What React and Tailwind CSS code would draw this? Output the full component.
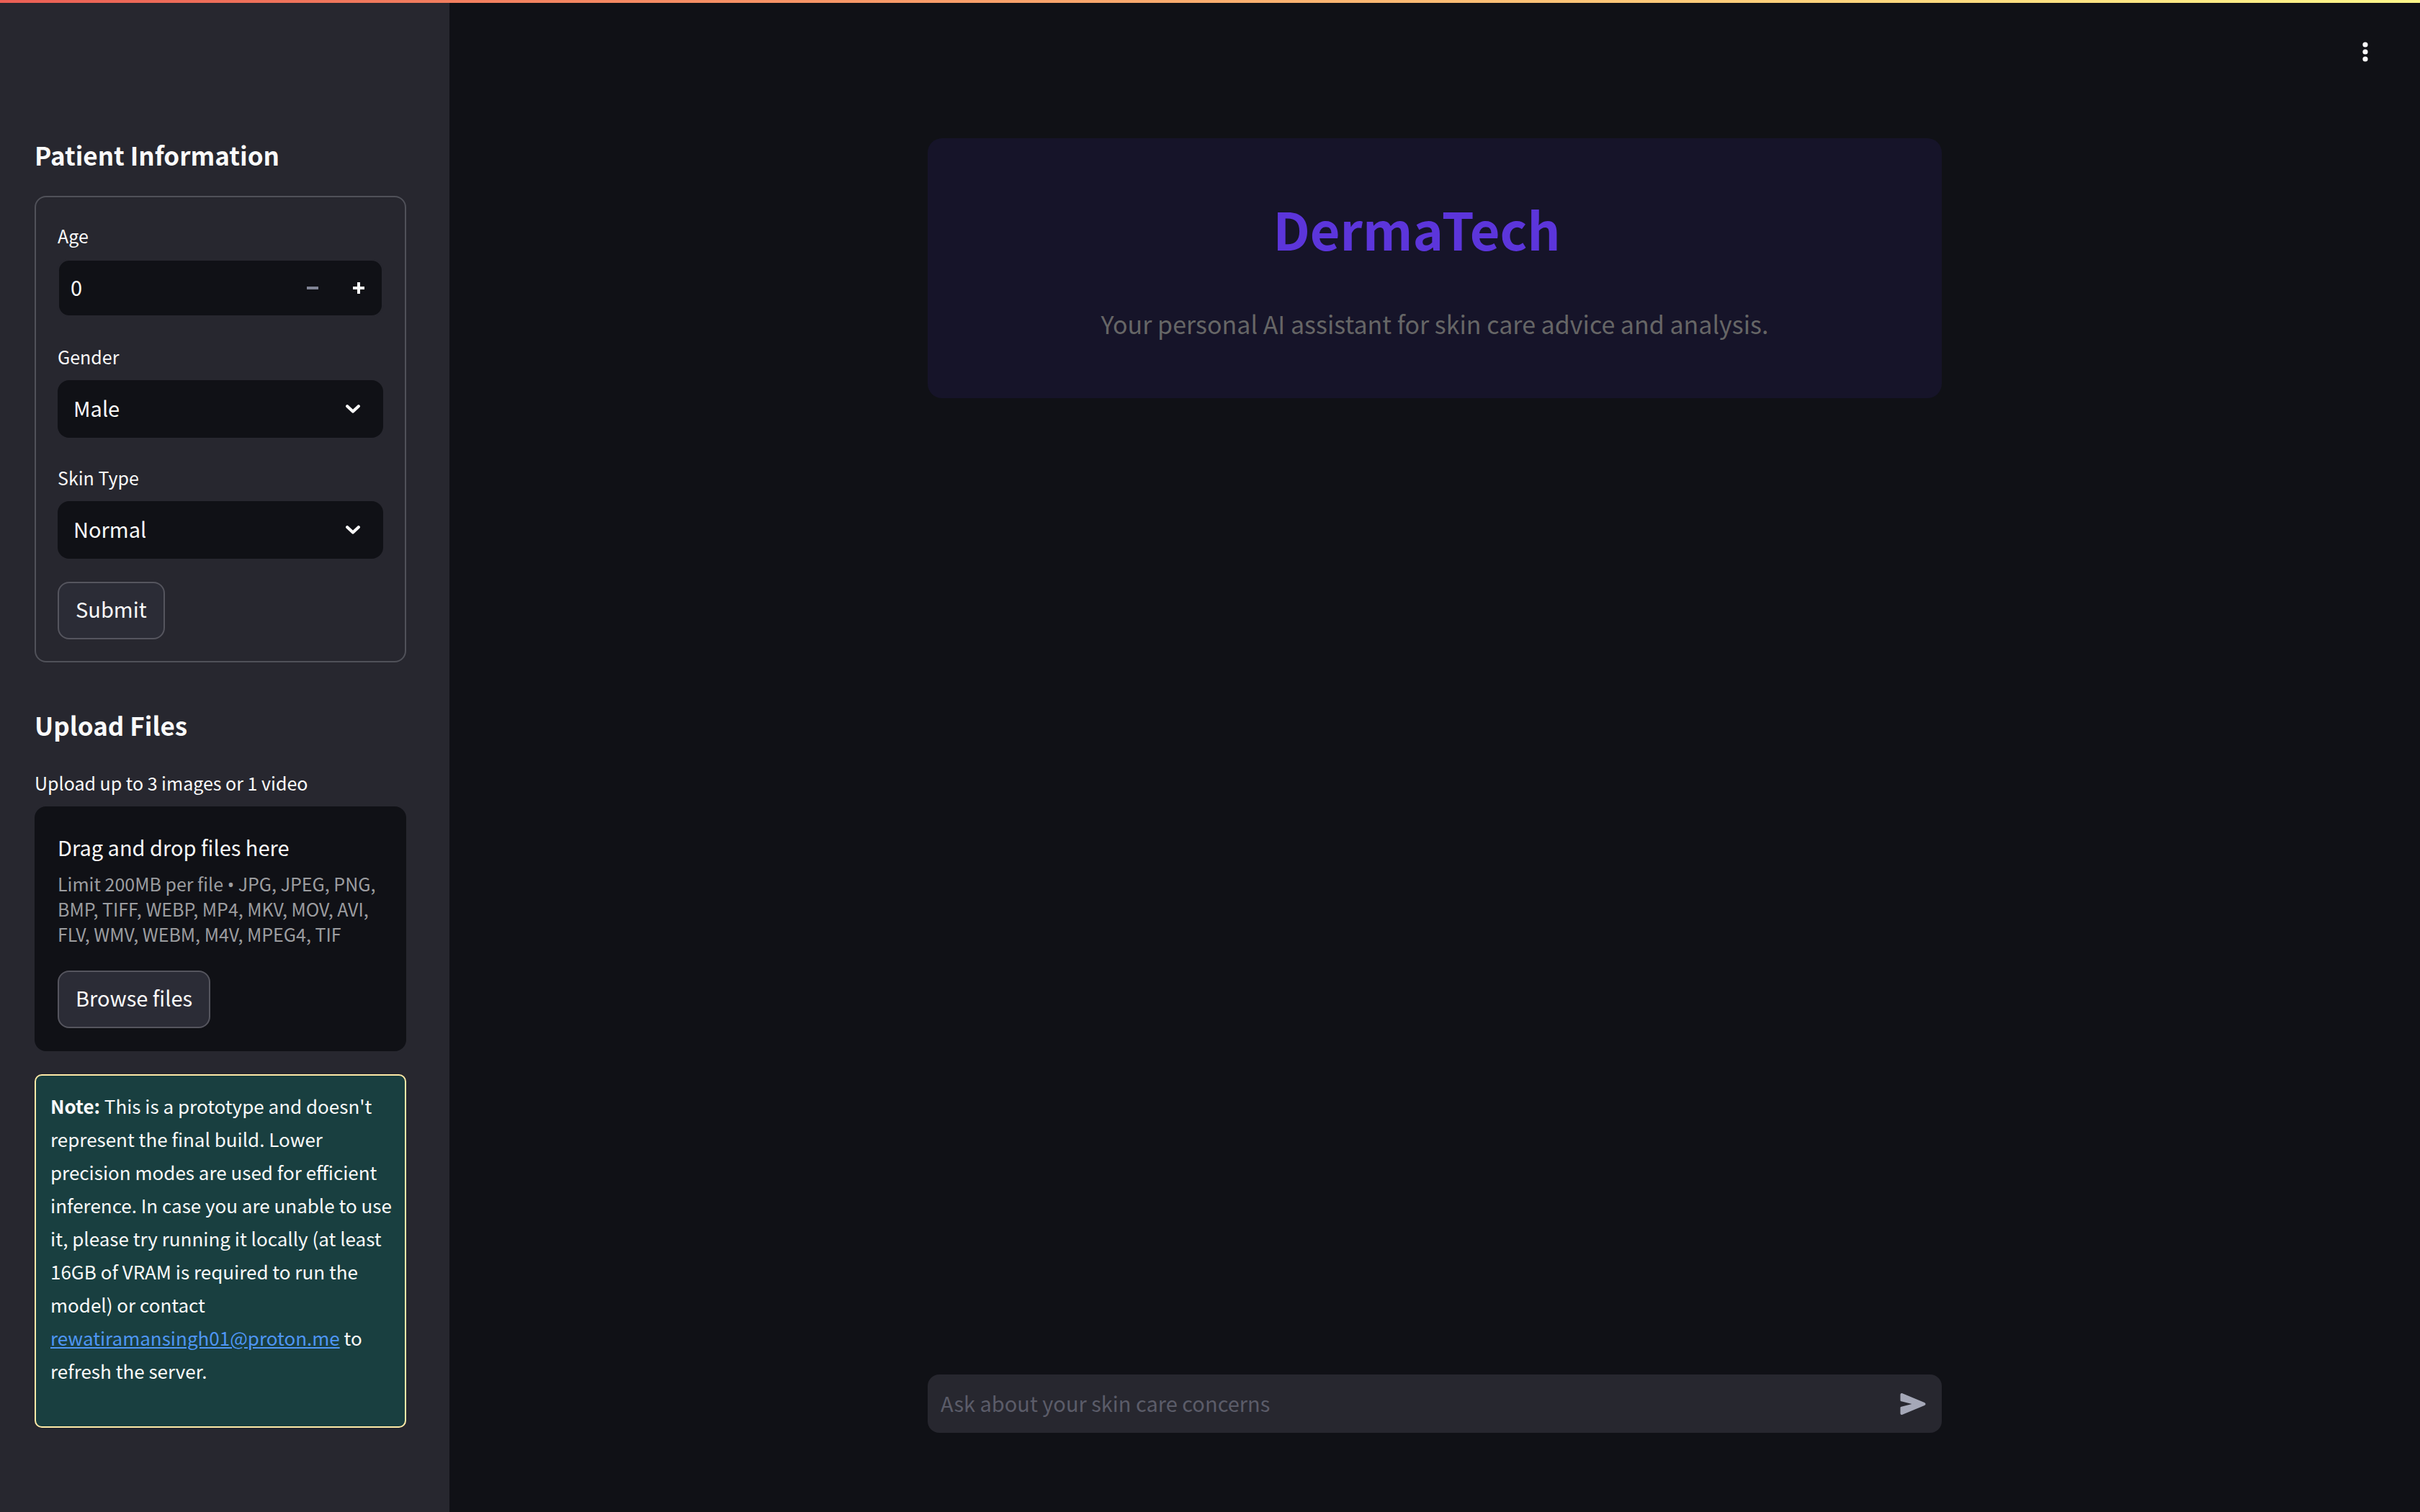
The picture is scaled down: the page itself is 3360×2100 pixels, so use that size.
import { useState } from "react";

function Chevron() {
  return (
    <svg viewBox="0 0 20 12" className="pointer-events-none absolute right-8 h-3 w-5" fill="none" aria-hidden="true">
      <path d="M2.2 2.2 L10 9.6 L17.8 2.2" stroke="#fafafa" strokeWidth="4.2" strokeLinecap="round" strokeLinejoin="round" />
    </svg>
  );
}

function SectionTitle({ children }) {
  return <h2 className="pt-[31px] pb-px text-[35px] leading-[48px] font-bold">{children}</h2>;
}

function FieldLabel({ htmlFor, children }) {
  return (
    <label htmlFor={htmlFor} className="flex h-14 items-start text-[25px] leading-[46px]">
      {children}
    </label>
  );
}

function SelectField({ id, label, options }) {
  return (
    <div>
      <FieldLabel htmlFor={id}>{label}</FieldLabel>
      <div className="relative flex items-center">
        <select id={id} className="h-20 w-full appearance-none rounded-2xl bg-[#101116] pr-16 pb-[2px] pl-[22px] text-[29px] outline-none">
          {options.map((option) => (
            <option key={option}>{option}</option>
          ))}
        </select>
        <Chevron />
      </div>
    </div>
  );
}

function AgeField() {
  const [age, setAge] = useState(0);
  return (
    <div>
      <FieldLabel htmlFor="age">Age</FieldLabel>
      <div className="flex h-20 overflow-hidden rounded-2xl border-2 border-[#27272f] bg-[#101116]">
        <input
          id="age"
          inputMode="numeric"
          value={age}
          onChange={(e) => setAge(Number(e.target.value) || 0)}
          className="min-w-0 flex-1 bg-transparent pb-[2px] pl-4 text-[29px] outline-none"
        />
        <button type="button" aria-label="Decrease age" onClick={() => setAge(Math.max(0, age - 1))} className="flex w-16 items-center justify-center">
          <svg viewBox="0 0 16 16" className="size-4" aria-hidden="true">
            <path d="M0 6h16v4H0z" fill="#808495" />
          </svg>
        </button>
        <button type="button" aria-label="Increase age" onClick={() => setAge(age + 1)} className="flex w-16 items-center justify-center">
          <svg viewBox="0 0 16 16" className="size-4" aria-hidden="true">
            <path d="M6 0h4v6h6v4h-6v6H6v-6H0V6h6z" fill="#fafafa" />
          </svg>
        </button>
      </div>
    </div>
  );
}

function Button({ children }) {
  return (
    <button type="button" className="h-20 self-start rounded-2xl border-2 border-[#55555e] bg-[#2b2c36] px-[23px] pb-1 text-[29px]">
      {children}
    </button>
  );
}

function Sidebar() {
  return (
    <aside className="flex w-[624px] shrink-0 flex-col gap-8 bg-[#27272f] pt-[160px] pr-[60px] pb-12 pl-12">
      <SectionTitle>Patient Information</SectionTitle>
      <form className="flex flex-col gap-8 rounded-2xl border-2 border-[#505159] p-[30px]">
        <AgeField />
        <SelectField id="gender" label="Gender" options={["Male", "Female", "Other"]} />
        <SelectField id="skin" label="Skin Type" options={["Normal", "Oily", "Dry", "Combination"]} />
        <Button>Submit</Button>
      </form>

      <SectionTitle>Upload Files</SectionTitle>
      <div>
        <p className="h-14 text-[25px] leading-[46px]">Upload up to 3 images or 1 video</p>
        <section className="flex flex-col rounded-2xl bg-[#101116] p-8">
          <p className="mb-[10px] text-[29px] leading-[48px]">Drag and drop files here</p>
          <p className="mb-[33px] text-[25px] leading-[35px] text-[#9c9da0]">
            Limit 200MB per file <span className="font-['Noto_Sans'] leading-none">•</span> JPG, JPEG, PNG, BMP, TIFF, WEBP,
            MP4, MKV, MOV, AVI, FLV, WMV, WEBM, M4V, MPEG4, TIF
          </p>
          <Button>Browse files</Button>
        </section>
      </div>

      <div className="rounded-[10px] border-2 border-[#ffeaa7] bg-[#193f40] pt-[19px] pr-3 pb-[54px] pl-5 text-[26px] leading-[46px]">
        <p>
          <strong>Note:</strong> This is a prototype and doesn't represent the final build. Lower precision modes are used for
          efficient inference. In case you are unable to use it, please try running it locally (at least 16GB of VRAM is
          required to run the model) or contact{" "}
          <a href="mailto:rewatiramansingh01@proton.me" className="text-[#4e96f4] underline">
            rewatiramansingh01@proton.me
          </a>{" "}
          to refresh the server.
        </p>
      </div>
    </aside>
  );
}

function ChatInput() {
  return (
    <form className="mt-auto flex h-[81px] w-full items-center rounded-2xl bg-[#27272f]">
      <input
        aria-label="Ask about your skin care concerns"
        placeholder="Ask about your skin care concerns"
        className="h-full min-w-0 flex-1 bg-transparent pb-1 pl-[18px] text-[29px] outline-none placeholder:text-[#5b5c69]"
      />
      <button type="button" aria-label="Send" className="flex h-full w-20 items-center justify-center">
        <svg viewBox="0 0 36 30" className="h-[30px] w-9" aria-hidden="true">
          <path
            d="M0.5 2.2 C0.5 0.6 1.8 -0.3 3.4 0.3 L34 13 C36 14 36 16.2 34 17.1 L3.4 29.7 C1.8 30.3 0.5 29.5 0.5 27.9 V20.3 C0.5 19.4 1 18.9 1.9 18.7 L16.5 15 L1.9 11.3 C1 11.1 0.5 10.6 0.5 9.7 Z"
            fill="#a5a8b8"
          />
        </svg>
      </button>
    </form>
  );
}

export default function App() {
  return (
    <div className="relative flex min-h-screen bg-[#101116] font-['Noto_Sans_CJK_SC','Noto_Sans',sans-serif] text-[#fafafa]">
      <div className="absolute inset-x-0 top-0 h-1 bg-linear-to-r from-[#eb5f55] to-[#fff78a]" />
      <Sidebar />
      <main className="flex flex-1 flex-col items-center pt-[192px] pb-[110px]">
        <div className="flex w-full max-w-[1408px] flex-1 flex-col">
          <header className="rounded-[20px] bg-[#161429] px-10 pt-[69px] pb-[74px] text-center">
            <h1 className="pr-[50px] text-7xl leading-[112px] font-bold text-[#5c35db]">DermaTech</h1>
            <p className="mt-12 text-[34px] leading-[58px] text-[#666666]">Your personal AI assistant for skin care advice and analysis.</p>
          </header>
          <ChatInput />
        </div>
      </main>
      <button type="button" aria-label="Main menu" className="absolute top-12 right-13 flex size-12 items-center justify-center">
        <svg viewBox="0 0 48 48" className="size-12" fill="#fafafa" aria-hidden="true">
          <circle cx="24" cy="14" r="3.6" />
          <circle cx="24" cy="24" r="3.6" />
          <circle cx="24" cy="34" r="3.6" />
        </svg>
      </button>
    </div>
  );
}
